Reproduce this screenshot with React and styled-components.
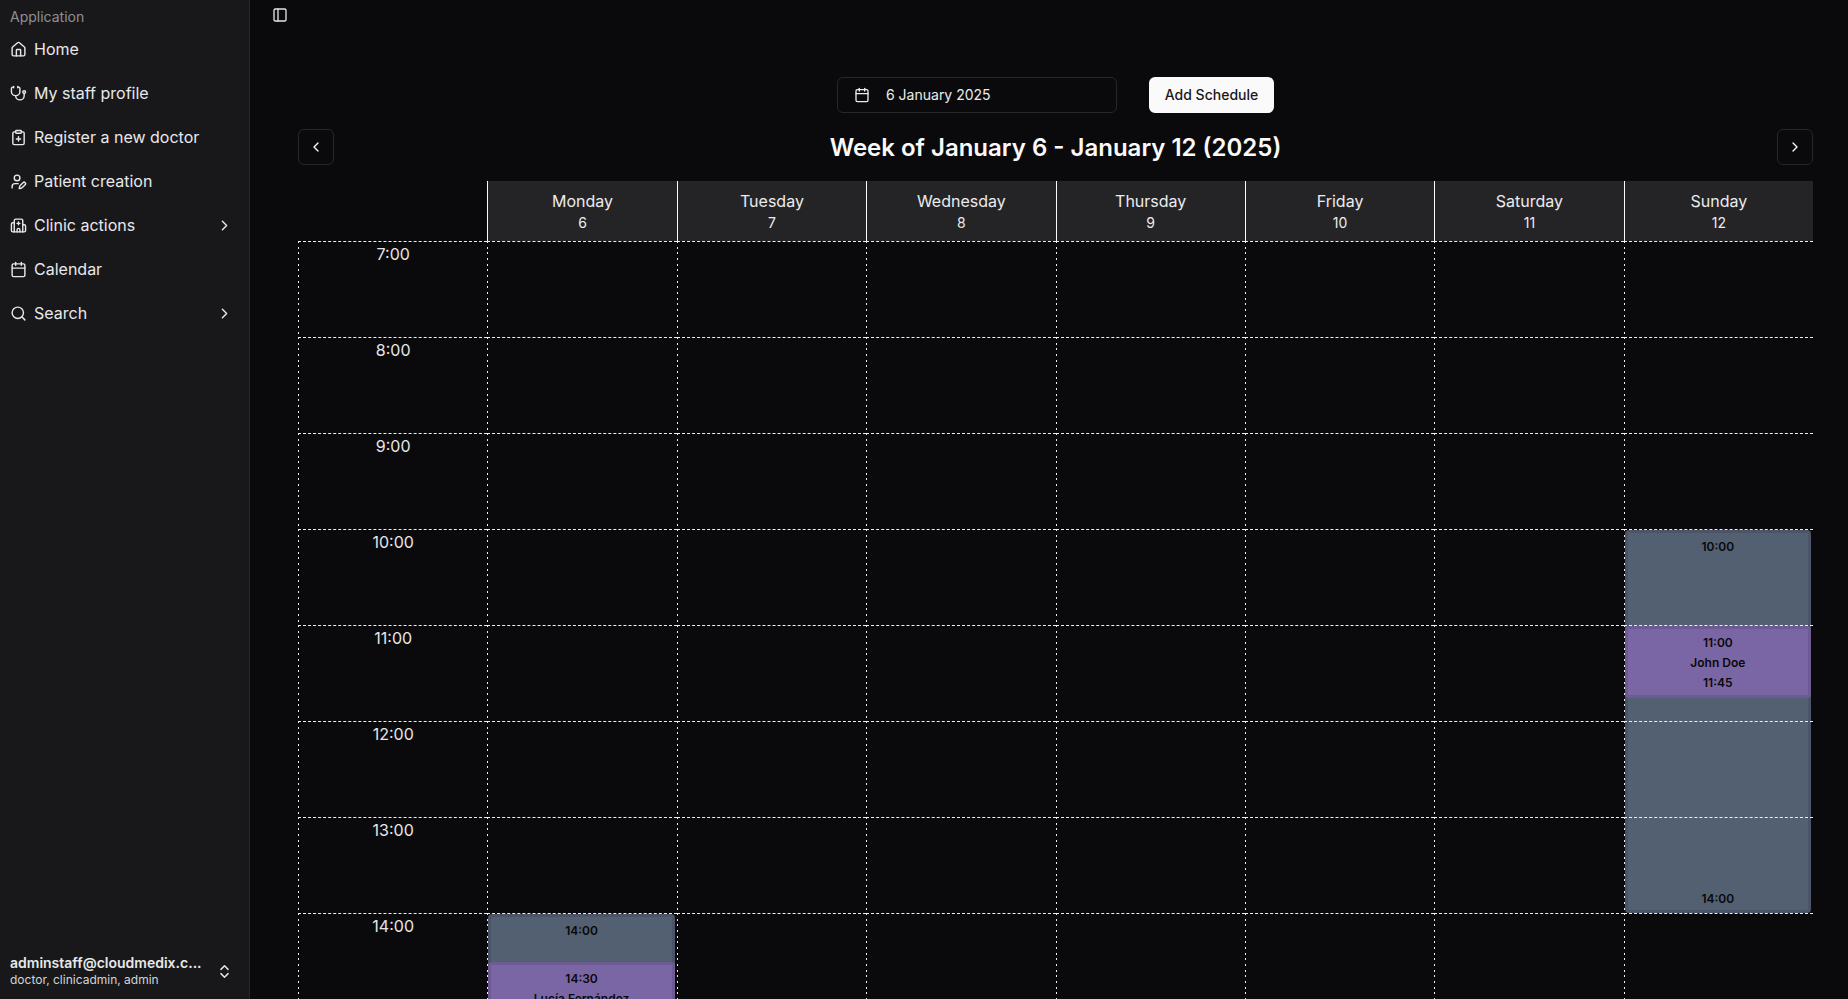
import React from "react";
import styled, { createGlobalStyle } from "styled-components";
import {
  Calendar,
  ChevronLeft,
  ChevronRight,
  ChevronsUpDown,
  ClipboardPlus,
  Hospital,
  House,
  PanelLeft,
  Search,
  Stethoscope,
  UserPen,
} from "lucide-react";

const HOUR_HEIGHT = 96;

const menu = [
  { label: "Home", icon: House },
  { label: "My staff profile", icon: Stethoscope },
  { label: "Register a new doctor", icon: ClipboardPlus },
  { label: "Patient creation", icon: UserPen },
  { label: "Clinic actions", icon: Hospital, more: true },
  { label: "Calendar", icon: Calendar },
  { label: "Search", icon: Search, more: true },
];

const days = [
  ["Monday", 6],
  ["Tuesday", 7],
  ["Wednesday", 8],
  ["Thursday", 9],
  ["Friday", 10],
  ["Saturday", 11],
  ["Sunday", 12],
];

const hours = [7, 8, 9, 10, 11, 12, 13, 14, 15, 16];

const schedules = [
  {
    day: 0,
    hour: 14,
    from: "14:00",
    to: "16:00",
    length: 2,
    appointments: [{ offset: 0.5, length: 0.75, from: "14:30", name: "Lucía Fernández", to: "15:15" }],
  },
  {
    day: 6,
    hour: 10,
    from: "10:00",
    to: "14:00",
    length: 4,
    appointments: [{ offset: 1, length: 0.75, from: "11:00", name: "John Doe", to: "11:45" }],
  },
];

function App() {
  return (
    <Layout>
      <GlobalStyle />
      <Sidebar>
        <GroupLabel>Application</GroupLabel>
        <Menu>
          {menu.map((item) => (
            <MenuItem key={item.label}>
              <item.icon size={17} />
              <MenuLabel>{item.label}</MenuLabel>
              {item.more && <ChevronRight size={17} />}
            </MenuItem>
          ))}
        </Menu>
        <UserRow>
          <UserText>
            <UserMail>adminstaff@cloudmedix.c...</UserMail>
            <UserRoles>doctor, clinicadmin, admin</UserRoles>
          </UserText>
          <ChevronsUpDown size={17} />
        </UserRow>
      </Sidebar>
      <Main>
        <TopBar>
          <PanelLeft size={16} />
        </TopBar>
        <Content>
          <Toolbar>
            <DateButton>
              <Calendar size={16} />
              6 January 2025
            </DateButton>
            <AddButton>Add Schedule</AddButton>
          </Toolbar>
          <WeekRow>
            <NavButton>
              <ChevronLeft size={16} />
            </NavButton>
            <WeekTitle>Week of January 6 - January 12 (2025)</WeekTitle>
            <NavButton>
              <ChevronRight size={16} />
            </NavButton>
          </WeekRow>
          <Week>
            <span />
            {days.map(([name, date]) => (
              <DayHead key={name}>
                <DayName>{name}</DayName>
                <DayDate>{date}</DayDate>
              </DayHead>
            ))}
            {hours.map((hour) => (
              <React.Fragment key={hour}>
                <HourCell>{hour}:00</HourCell>
                {days.map(([name], day) => {
                  const schedule = schedules.find((s) => s.day === day && s.hour === hour);
                  return (
                    <Slot key={name}>
                      {schedule && (
                        <Schedule $length={schedule.length}>
                          <span>{schedule.from}</span>
                          <span>{schedule.to}</span>
                          {schedule.appointments.map((a) => (
                            <Appointment key={a.from} $offset={a.offset} $length={a.length}>
                              <span>{a.from}</span>
                              <span>{a.name}</span>
                              <span>{a.to}</span>
                            </Appointment>
                          ))}
                        </Schedule>
                      )}
                    </Slot>
                  );
                })}
              </React.Fragment>
            ))}
          </Week>
        </Content>
      </Main>
    </Layout>
  );
}

const GlobalStyle = createGlobalStyle`
  html, body {
    margin: 0;
    height: 100%;
    overflow: hidden;
    background: #0a0a0c;
    color: #fafafa;
    font-family: Inter, "Liberation Sans", sans-serif;
  }
  * {
    box-sizing: border-box;
  }
`;

const Layout = styled.div`
  display: flex;
  height: 100vh;
  overflow: hidden;
`;

const Sidebar = styled.aside`
  width: 250px;
  flex-shrink: 0;
  display: flex;
  flex-direction: column;
  background: #18181b;
  border-right: 1px solid #27272a;
  color: #e8e8ea;
`;

const GroupLabel = styled.div`
  height: 17px;
  margin: 8px 0 2px 10px;
  font-size: 14px;
  line-height: 17px;
  color: #8f8f96;
`;

const Menu = styled.nav`
  display: flex;
  flex-direction: column;
  flex: 1;
`;

const MenuItem = styled.div`
  height: 44px;
  padding: 0 16px 0 10px;
  display: flex;
  align-items: center;
  gap: 7px;
  font-size: 16px;
`;

const MenuLabel = styled.span`
  flex: 1;
`;

const UserRow = styled.div`
  height: 50px;
  margin-bottom: 3px;
  padding: 0 16px 0 10px;
  display: flex;
  align-items: center;
  justify-content: space-between;
`;

const UserText = styled.div`
  display: flex;
  flex-direction: column;
`;

const UserMail = styled.span`
  font-size: 14px;
  line-height: 18px;
  font-weight: 600;
`;

const UserRoles = styled.span`
  font-size: 12px;
  line-height: 16px;
  color: #d4d4d8;
`;

const Main = styled.main`
  flex: 1;
  min-width: 0;
  overflow: hidden;
`;

const TopBar = styled.div`
  height: 30px;
  padding: 7px 0 0 22px;
  display: flex;
  color: #e4e4e7;
`;

const Content = styled.div`
  padding: 47px 35px 0 48px;
`;

const Toolbar = styled.div`
  display: flex;
  justify-content: center;
  gap: 32px;
`;

const DateButton = styled.div`
  width: 280px;
  height: 36px;
  padding: 0 16px 1px;
  display: flex;
  align-items: center;
  gap: 16px;
  font-size: 14px;
  color: #ececee;
  border: 1px solid #27272a;
  border-radius: 6px;
`;

const AddButton = styled.button`
  width: 125px;
  height: 36px;
  padding: 0 0 1px;
  border: 0;
  border-radius: 6px;
  background: #fafafa;
  color: #18181b;
  font-family: inherit;
  font-size: 14px;
  font-weight: 500;
`;

const WeekRow = styled.div`
  margin: 16px 0;
  display: flex;
  align-items: center;
  justify-content: space-between;
`;

const NavButton = styled.div`
  width: 36px;
  height: 36px;
  display: flex;
  align-items: center;
  justify-content: center;
  border: 1px solid #27272a;
  border-radius: 6px;
`;

const WeekTitle = styled.h1`
  margin: 0;
  padding-top: 2px;
  font-size: 24px;
  line-height: 32px;
  font-weight: 600;
`;

const Week = styled.div`
  display: grid;
  grid-template-columns: repeat(8, 1fr);
  grid-template-rows: 60px;
  grid-auto-rows: ${HOUR_HEIGHT}px;
`;

const DayHead = styled.div`
  display: flex;
  flex-direction: column;
  align-items: center;
  padding-top: 9px;
  background: #242427;
  border-left: 1px solid #fafafa;
  color: #ececee;
`;

const DayName = styled.span`
  font-size: 16px;
  line-height: 23px;
`;

const DayDate = styled.span`
  font-size: 14px;
  line-height: 20px;
`;

// vertical rules have shorter dashes than a 1px dashed border gives
const cellLines = `
  border-top: 1px dashed #f0f0f2;
  border-left: 1px solid transparent;
  background-image: repeating-linear-gradient(to bottom, #f0f0f2 0 2px, transparent 2px 5.67px);
  background-size: 1px 100%;
  background-repeat: no-repeat;
  background-origin: border-box;
  background-clip: border-box;
`;

const HourCell = styled.div`
  ${cellLines}
  padding-top: 2px;
  text-align: center;
  font-size: 16px;
  line-height: 20px;
  color: #e6e6e8;
`;

const Slot = styled.div`
  ${cellLines}
  position: relative;
`;

const Schedule = styled.div`
  position: absolute;
  top: 0;
  left: 0;
  right: 2px;
  height: ${(p) => p.$length * HOUR_HEIGHT - 1}px;
  padding: 4px 0 1px;
  display: flex;
  flex-direction: column;
  align-items: center;
  justify-content: space-between;
  background: #526071;
  border: 3px solid #4b5567;
  border-radius: 4px;
  color: #09090b;
  font-size: 12px;
  line-height: 20px;
  font-weight: 600;
`;

const Appointment = styled.div`
  position: absolute;
  left: -3px;
  right: -3px;
  top: ${(p) => p.$offset * HOUR_HEIGHT - 3}px;
  height: ${(p) => p.$length * HOUR_HEIGHT}px;
  padding: 4px 0 0;
  display: flex;
  flex-direction: column;
  align-items: center;
  background: #7b66a5;
  border: 3px solid #6e5b94;
  border-radius: 4px;
`;

export default App;
